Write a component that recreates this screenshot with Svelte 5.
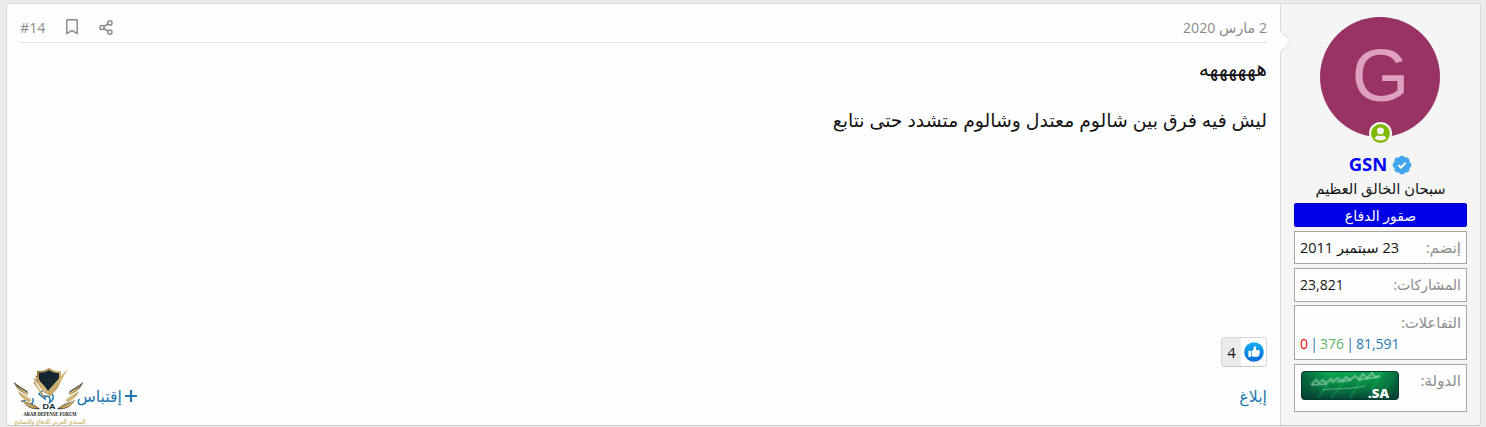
<script lang="ts">
	const author = {
		name: 'GSN',
		letter: 'G',
		title: 'سبحان الخالق العظيم',
		banner: 'صقور الدفاع'
	};

	const post = {
		number: '#14',
		date: '2 مارس 2020',
		lines: ['ههههههه', 'ليش فيه فرق بين شالوم معتدل وشالوم متشدد حتى نتابع'],
		reactions: 4
	};
</script>

<article class="message" dir="rtl" lang="ar">
	<aside class="user">
		<div class="avatar-wrap">
			<div class="avatar">{author.letter}</div>
			<svg class="online" viewBox="0 0 24 24">
				<circle cx="12" cy="12" r="12" fill="#f5f5f5" />
				<circle cx="12" cy="12" r="9.8" fill="#7fb900" />
				<circle cx="12" cy="9.3" r="3.6" fill="#f5f5f5" />
				<path d="M6.2 17.4c.3-2.4 1.7-3.4 3.4-3.4 1.5.7 3.3.7 4.8 0 1.7 0 3.1 1 3.4 3.4-3.2 2.4-8.4 2.4-11.6 0z" fill="#f5f5f5" />
			</svg>
		</div>
		<h4 class="name">
			<svg class="verified" viewBox="0 0 20 20">
				<g fill="#42a5ed">
					<circle cx="10" cy="10" r="7.8" />
					{#each [0, 45, 90, 135, 180, 225, 270, 315] as angle}
						<circle cx="10" cy="3.8" r="3.1" transform="rotate({angle} 10 10)" />
					{/each}
				</g>
				<path d="M6.4 10.1l2.5 2.5 4.8-4.8" fill="none" stroke="#fff" stroke-width="2" />
			</svg>
			<span>{author.name}</span>
		</h4>
		<div class="title"><span>{author.title}</span></div>
		<div class="banner"><span>{author.banner}</span></div>

		<dl class="extras">
			<div class="pair joined">
				<dt>إنضم:</dt>
				<dd>23 سبتمبر 2011</dd>
			</div>
			<div class="pair posts">
				<dt>المشاركات:</dt>
				<dd>23,821</dd>
			</div>
			<div class="pair score">
				<dt>التفاعلات:</dt>
				<dd dir="ltr"><span class="neg">0</span> | <span class="neutral">376</span> | <span class="pos">81,591</span></dd>
			</div>
			<div class="pair country">
				<dt>الدولة:</dt>
				<dd>
					<svg class="flag" viewBox="0 0 98 29">
						<defs>
							<linearGradient id="flagBase" x1="0" y1="0" x2="0" y2="1">
								<stop offset="0" stop-color="#0ba550" />
								<stop offset=".55" stop-color="#078042" />
								<stop offset="1" stop-color="#064438" />
							</linearGradient>
							<linearGradient id="flagSide" x1="0" y1="0" x2="1" y2="0">
								<stop offset="0" stop-color="#042f30" stop-opacity=".55" />
								<stop offset=".25" stop-color="#042f30" stop-opacity="0" />
								<stop offset=".8" stop-color="#042f30" stop-opacity="0" />
								<stop offset="1" stop-color="#042f30" stop-opacity=".5" />
							</linearGradient>
						</defs>
						<rect x=".5" y=".5" width="97" height="28" rx="3" fill="url(#flagBase)" />
						<g stroke="#18b65a" stroke-opacity=".3" stroke-width="2.5">
							<path d="M17 27L35 1M30 27L51 1M49 27L65 1M70 19L82 1M84 19L95 3" />
						</g>
						<rect x=".5" y=".5" width="97" height="28" rx="3" fill="url(#flagSide)" stroke="#063a2c" />
						<g fill="none" stroke="#a9d7bb" stroke-opacity=".5">
							<path d="M10 14l5-5 3 3 4-3 3 3 5-4 2 3 5-4 4 3 4-4 4 3 5-4 4 3 4-5 4 4 5-5 3 4 5-1" stroke-width="2.4" />
							<path d="M11 14l15-1M36 11l14-2M57 9l20-3" stroke-width="2" />
							<path d="M21 19c13-2 23 0 43-4" stroke-width="1" />
						</g>
						<text x="67" y="27" textLength="21" lengthAdjust="spacingAndGlyphs">.SA</text>
					</svg>
				</dd>
			</div>
		</dl>
		<svg class="arrow" viewBox="0 0 12 24">
			<path d="M0 0.5L11.2 11.5L0 22.5" fill="#fefefe" stroke="#d8d8d8" />
		</svg>
	</aside>

	<section class="main">
		<header class="attribution">
			<time>{post.date}</time>
			<div class="tools">
				<svg class="share" viewBox="0 0 14 15" fill="none" stroke="#8c8c8c" stroke-width="1.5">
					<circle cx="10.9" cy="2.9" r="2.1" />
					<circle cx="3" cy="7.5" r="2.1" />
					<circle cx="10.9" cy="12.1" r="2.1" />
					<path d="M4.9 6.5L9 4M4.9 8.5L9 11" />
				</svg>
				<svg class="bookmark" viewBox="0 0 12 16" fill="none" stroke="#8c8c8c" stroke-width="1.5">
					<path d="M.8 1.5Q.8.8 1.5.8h9Q11.2.8 11.2 1.5V14.5L6 11.5L.8 14.5z" />
				</svg>
				<span class="number" dir="ltr">{post.number}</span>
			</div>
		</header>

		<div class="content">
			<p class="laugh">{post.lines[0]}</p>
			<p class="question">{post.lines[1]}</p>
		</div>

		<div class="reactions">
			<svg class="like" viewBox="0 0 20 20">
				<defs>
					<linearGradient id="likeFill" x1="0" y1="0" x2="0" y2="1">
						<stop offset="0" stop-color="#13aff2" />
						<stop offset="1" stop-color="#0768d9" />
					</linearGradient>
				</defs>
				<circle cx="10" cy="10" r="9.8" fill="url(#likeFill)" />
				<path d="M4.4 8.8h2.5v6.3H4.4zM7.6 9c1.4-.6 2-1.6 2.2-3.2.1-1.3.7-1.9 1.5-1.5 1.2.6 1 2.1.6 3.6h2.7c1 0 1.4.8.9 1.6.5.6.4 1.2-.1 1.7.3.7.1 1.2-.4 1.6.1 1.3-.5 2-1.7 2h-3.1c-1.2 0-1.8-.5-2.6-.8z" fill="#fff" />
			</svg>
			<span class="count">{post.reactions}</span>
		</div>

		<footer class="actions">
			<span class="report">إبلاغ</span>
			<div class="external">
				<span class="quote">
					<svg class="plus" viewBox="0 0 12 12"><path d="M6 0v12M0 6h12" stroke="#2577b1" stroke-width="2.2" /></svg>
					<span>إقتباس</span>
				</span>
				<span class="reply">
					<svg viewBox="0 0 17 16"><path d="M7 1L1 6l6 5V8c4 0 6 1 4.5 6.5C17 11 17 4 7 4z" fill="none" stroke="#2577b1" stroke-width="1.5" /></svg>
					<span>رد</span>
				</span>
			</div>
		</footer>
	</section>
</article>

<!-- Forum watermark -->
<svg class="watermark" viewBox="0 0 78 60">
	<defs>
		<linearGradient id="gold" x1="0" y1="0" x2="1" y2="1">
			<stop offset="0" stop-color="#8c6a35" />
			<stop offset=".5" stop-color="#d8bd7c" />
			<stop offset="1" stop-color="#a88445" />
		</linearGradient>
	</defs>
	<g id="wing">
		<path d="M1 14c5 5 10 6 14 10l-1 3C9 24 3 21 1 14zM9 32c5 3 10 3 14 6l4 3C19 42 13 39 9 32z" fill="#1b2a33" />
		<path d="M1 14c5 6 10 7 14 11l-1 2C10 25 4 21 1 14zM5 23c5 4 10 5 13 9l-1 2C12 33 7 29 5 23zM9 32c6 4 12 4 17 8-6 2-13-1-17-8z" fill="url(#gold)" />
	</g>
	<use href="#wing" transform="translate(71 0) scale(-1 1)" />
	<path d="M25 4c4 0 8-1 11-3 3 2 7 3 11 3 1 12-3 18-11 22C28 22 24 16 25 4z" fill="#142630" stroke="url(#gold)" stroke-width="2" />
	<path d="M20 10c7 2 11 7 15 13C41 16 48 8 55 0 50 11 43 20 37 29 31 22 25 17 20 10z" fill="url(#gold)" />
	<path d="M21 14l10 15M23 8l7 12" stroke="url(#gold)" stroke-width="1.5" />
	<text x="36" y="41" class="da" textLength="13" lengthAdjust="spacingAndGlyphs">DA</text>
	<text x="37" y="48" class="en" textLength="53" lengthAdjust="spacingAndGlyphs">ARAB DEFENSE FORUM</text>
	<text x="37" y="55.5" class="ar" textLength="71" lengthAdjust="spacingAndGlyphs">المنتدى العربي للدفاع والتسليح</text>
</svg>

<style>
	:global(body) {
		background: #ebebeb;
		overflow: hidden;
	}

	.message {
		display: flex;
		box-sizing: border-box;
		width: 1475px;
		height: 423px;
		margin: 3px 0 0 6px;
		border: 1px solid #d8d8d8;
		border-bottom-color: #c8c8c8;
		border-radius: 4px;
		background: #fefefe;
		font-family: "Open Sans", "DejaVu Sans", sans-serif;
		font-size: 15px;
		color: #141414;
	}

	.user {
		position: relative;
		flex: 0 0 200px;
		box-sizing: border-box;
		padding: 13px 13px 0;
		border-left: 1px solid #d8d8d8;
		border-radius: 0 3px 3px 0;
		background: #f5f5f5;
	}

	.arrow {
		position: absolute;
		left: -1px;
		top: 26px;
		width: 12px;
		height: 24px;
	}

	.avatar-wrap {
		position: relative;
		width: 120px;
		margin: 0 27px 0 auto;
	}

	.avatar {
		height: 120px;
		border-radius: 50%;
		background: #993366;
		color: #df9fbf;
		font-family: "Liberation Sans", Arial, sans-serif;
		font-size: 74px;
		line-height: 118px;
		text-align: center;
		text-indent: -1px;
	}

	.online {
		position: absolute;
		left: 49px;
		top: 105px;
		width: 23px;
		height: 23px;
	}

	.name {
		display: flex;
		align-items: center;
		justify-content: center;
		gap: 5px;
		height: 22px;
		margin: 17px 0 0;
		color: #0000ff;
		font-size: 18.5px;
		font-weight: 700;
	}

	.name span {
		line-height: 22px;
		padding-bottom: 2px;
	}

	.verified {
		width: 20px;
		height: 20px;
	}

	.title {
		height: 25px;
		line-height: 22px;
		margin-top: 1px;
		text-align: center;
		font-size: 14.7px;
		white-space: nowrap;
	}

	.banner {
		box-sizing: border-box;
		height: 24px;
		margin-top: 1px;
		border: 1px solid #0000c8;
		border-radius: 2px;
		background: #0000e6;
		color: #fff;
		font-size: 14px;
		line-height: 23px;
		text-align: center;
	}

	.extras {
		margin: 4px 0 0;
	}

	.pair {
		display: flex;
		justify-content: space-between;
		box-sizing: border-box;
		height: 33px;
		margin-bottom: 4px;
		padding: 0 5px;
		border: 1px solid #a6a6a6;
		background: #fefefe;
		font-size: 15px;
		line-height: 31px;
		white-space: nowrap;
	}

	.pair dt {
		color: #8c8c8c;
	}

	.pair dd {
		margin: 0;
		font-size: 14.5px;
	}

	.pair.posts {
		height: 34px;
		margin-bottom: 3px;
	}

	.posts dt {
		font-size: 14px;
	}

	.pair.posts dd {
		font-size: 14px;
	}

	.pair.score {
		flex-direction: column;
		justify-content: flex-start;
		height: 55px;
		padding-top: 6px;
		line-height: 21px;
	}

	.score dt {
		font-size: 14.6px;
	}

	.pair.score dd {
		color: #2577b1;
		font-size: 14px;
		word-spacing: -1.5px;
	}

	.score .neg { color: #f00; }
	.score .neutral { color: #63b265; }
	.score .pos { color: #2577b1; }

	.pair.country {
		height: 48px;
	}

	.flag {
		display: block;
		width: 98px;
		height: 29px;
		margin: 6px 0 0 1px;
		overflow: visible;
	}

	.flag text {
		fill: #fff;
		font-family: "Open Sans", sans-serif;
		font-size: 13px;
		font-weight: 800;
		direction: ltr;
	}

	.main {
		display: flex;
		flex: 1;
		flex-direction: column;
		min-width: 0;
		padding: 11px 13px 0;
	}

	.attribution {
		display: flex;
		justify-content: space-between;
		align-items: center;
		box-sizing: border-box;
		height: 28px;
		padding-bottom: 3px;
		border-bottom: 1px solid #e3e3e3;
		color: #8c8c8c;
		font-size: 14.2px;
	}

	.tools {
		display: flex;
		align-items: center;
	}

	.share {
		width: 14px;
		height: 15px;
		margin-left: 21px;
	}

	.bookmark {
		width: 12px;
		height: 16px;
		margin-left: 21px;
	}

	.content {
		flex: 1;
		font-size: 18.85px;
		line-height: 26px;
		white-space: nowrap;
	}

	.content p {
		margin: 12px 0 26px;
	}

	.content .laugh {
		font-size: 20.3px;
	}

	.reactions {
		display: flex;
		align-items: center;
		align-self: flex-start;
		box-sizing: border-box;
		width: 46px;
		height: 30px;
		border: 1px solid #d8d8d8;
		border-bottom-color: #c8c8c8;
		border-radius: 4px;
		overflow: hidden;
	}

	.like {
		width: 20px;
		height: 20px;
		margin: 0 2px 0 3px;
	}

	.count {
		flex: 1;
		background: #ebebeb;
		line-height: 30px;
		text-align: center;
	}

	.actions {
		display: flex;
		justify-content: space-between;
		height: 58px;
		color: #2577b1;
		font-size: 15.8px;
		line-height: 58px;
	}

	.external,
	.quote,
	.reply {
		display: flex;
		align-items: center;
	}

	.external {
		width: 117px;
		justify-content: space-between;
	}

	.quote {
		gap: 3px;
	}

	.plus {
		width: 12px;
		height: 12px;
	}

	.reply {
		gap: 3px;
	}

	.reply svg {
		width: 17px;
		height: 16px;
	}

	.watermark {
		position: absolute;
		left: 13px;
		top: 368px;
		width: 78px;
		height: 60px;
		overflow: visible;
	}

	.watermark text {
		text-anchor: middle;
		font-weight: 700;
	}

	.da {
		fill: #142630;
		font-family: "Liberation Sans", sans-serif;
		font-size: 7px;
	}

	.en {
		fill: #222;
		font-family: "Liberation Serif", serif;
		font-size: 6px;
	}

	.ar {
		fill: #d7bd84;
		font-family: "DejaVu Sans", sans-serif;
		font-size: 6.5px;
	}
</style>
